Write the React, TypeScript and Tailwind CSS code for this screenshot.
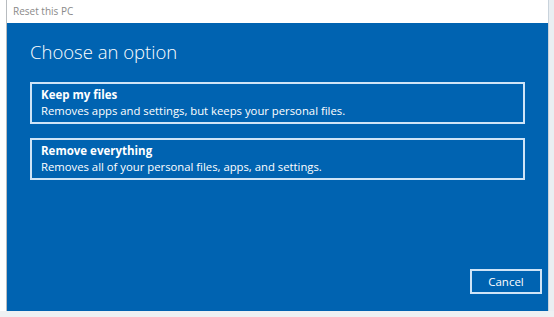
export default function App() {
  const font = { fontFamily: '"Open Sans", "Noto Sans", "Liberation Sans", sans-serif' };
  return (
    <div className="w-[554px] h-[317px] bg-[#f4f6f7] overflow-hidden flex flex-col" style={font}>
      <div className="flex flex-1">
        <div className="w-[7px] border-r border-[#b8bcc0] bg-white" />
        <div className="w-[541px] flex flex-col">
          <div className="h-[23px] bg-white flex items-center pl-[6px] text-[10px] text-[#8a8a8a]">
            Reset this PC
          </div>
          <div className="flex-1 bg-[#0063b1] flex flex-col pl-[23px] pr-[6px] pt-[17px] pb-[17px]">
            <div className="text-[18.5px] font-light text-white leading-[24px]">Choose an option</div>
            <div className="mt-[18px] flex flex-col gap-[14px] w-[495px]">
              <div className="border-2 border-[#cfe4f7] px-[9px] py-[3px] text-white leading-[16px]">
                <div className="text-[11.5px] font-bold">Keep my files</div>
                <div className="text-[11.3px]">Removes apps and settings, but keeps your personal files.</div>
              </div>
              <div className="border-2 border-[#cfe4f7] px-[9px] py-[3px] text-white leading-[16px]">
                <div className="text-[11.5px] font-bold">Remove everything</div>
                <div className="text-[11.3px]">Removes all of your personal files, apps, and settings.</div>
              </div>
            </div>
            <div className="flex-1" />
            <div className="flex justify-end">
              <div className="w-[72px] h-[25px] border-2 border-[#cfe4f7] flex items-center justify-center text-[11.5px] text-white">
                Cancel
              </div>
            </div>
          </div>
        </div>
        <div className="flex-1 bg-[#e9eef2] border-l border-[#c9d3dc]" />
      </div>
      <div className="h-[6px] bg-[#eef1f3]" />
    </div>
  );
}
